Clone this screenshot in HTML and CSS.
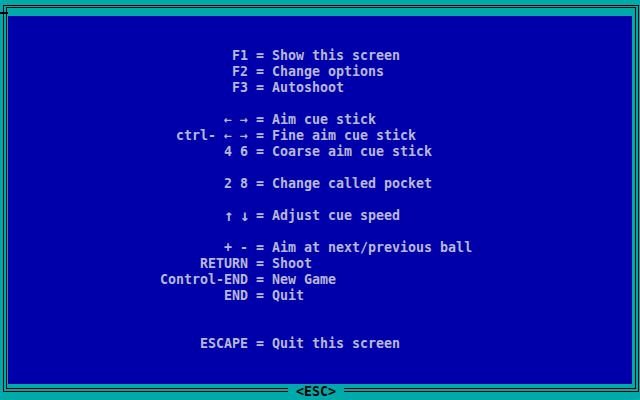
FILE: index.html
```html
<!DOCTYPE html>
<html>
<head>
<meta charset="utf-8">
<title>Help</title>
<link rel="stylesheet" href="styles.css">
</head>
<body>
<div class="outer">
  <div class="inner">
    <main class="screen">
      <dl class="group">
        <dt>F1</dt><dd class="eq">=</dd><dd>Show this screen</dd>
        <dt>F2</dt><dd class="eq">=</dd><dd>Change options</dd>
        <dt>F3</dt><dd class="eq">=</dd><dd>Autoshoot</dd>
      </dl>
      <dl class="group">
        <dt>← →</dt><dd class="eq">=</dd><dd>Aim cue stick</dd>
        <dt>ctrl- ← →</dt><dd class="eq">=</dd><dd>Fine aim cue stick</dd>
        <dt>4 6</dt><dd class="eq">=</dd><dd>Coarse aim cue stick</dd>
      </dl>
      <dl class="group">
        <dt>2 8</dt><dd class="eq">=</dd><dd>Change called pocket</dd>
      </dl>
      <dl class="group">
        <dt><span class="tall">↑</span> <span class="tall">↓</span></dt><dd class="eq">=</dd><dd>Adjust cue speed</dd>
      </dl>
      <dl class="group group-wide">
        <dt>+ -</dt><dd class="eq">=</dd><dd>Aim at next/previous ball</dd>
        <dt>RETURN</dt><dd class="eq">=</dd><dd>Shoot</dd>
        <dt>Control-END</dt><dd class="eq">=</dd><dd>New Game</dd>
        <dt>END</dt><dd class="eq">=</dd><dd>Quit</dd>
      </dl>
      <dl class="group">
        <dt>ESCAPE</dt><dd class="eq">=</dd><dd>Quit this screen</dd>
      </dl>
    </main>
  </div>
</div>
<span class="corner-mark"></span>
<div class="esc-label">&lt;ESC&gt;</div>
</body>
</html>
```
FILE: styles.css
```css
html, body {
  margin: 0;
  padding: 0;
}
body {
  width: 640px;
  height: 400px;
  overflow: hidden;
  position: relative;
  background: #00aaaa;
  font-family: "DejaVu Sans Mono", "Liberation Mono", monospace;
  font-size: 13.3px;
  font-weight: bold;
  line-height: 16px;
}
.outer {
  margin: 5px 1px 0 3px;
  border: 1px solid #000;
  padding: 1px 2px 2px 2px;
}
.inner {
  border: 1px solid #000;
  padding: 8px 3px 4px 1px;
}
.screen {
  display: block;
  height: 368px;
  box-sizing: border-box;
  padding-top: 32px;
  background: #0000aa;
  color: #b8b8d8;
}
.group {
  display: grid;
  grid-template-columns: 240px 24px 1fr;
  margin: 0 0 16px 0;
  white-space: pre;
}
.group-wide {
  margin-bottom: 32px;
}
.group dt {
  text-align: right;
}
.group dd {
  margin: 0;
}
.group .eq {
  text-align: center;
}
.tall {
  display: inline-block;
  width: 8px;
  text-align: center;
  font-size: 16px;
  line-height: 16px;
  vertical-align: top;
}
.corner-mark {
  position: absolute;
  left: 0;
  top: 12px;
  width: 8px;
  height: 2px;
  background: #000;
}
.esc-label {
  position: absolute;
  left: 288px;
  top: 384px;
  width: 56px;
  height: 16px;
  background: #00aaaa;
  color: #000;
  text-align: center;
}
```
